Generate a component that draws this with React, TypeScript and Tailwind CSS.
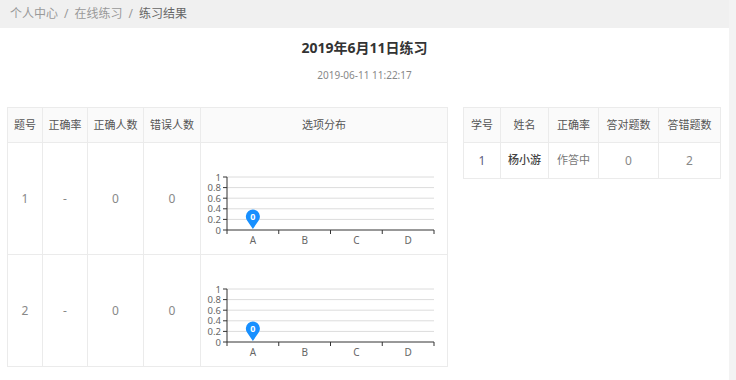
const font = {
  fontFamily: '"Noto Sans", "Noto Sans CJK SC", sans-serif',
};

const leftHead = ["题号", "正确率", "正确人数", "错误人数", "选项分布"];
const leftCols = [35, 45, 56, 57, 247];
const rightHead = ["学号", "姓名", "正确率", "答对题数", "答错题数"];
const rightCols = [37, 48, 50, 60, 62];

const questions = [
  { no: 1, rate: "-", right: 0, wrong: 0 },
  { no: 2, rate: "-", right: 0, wrong: 0 },
];

function OptionChart() {
  const top = 34;
  const step = 10.6;
  const x0 = 26;
  const x1 = 233;
  const yLabels = ["1", "0.8", "0.6", "0.4", "0.2", "0"];
  const base = top + step * 5;
  const seg = (x1 - x0) / 4;
  return (
    <svg width="247" height="111" className="block">
      {yLabels.map((l, i) => {
        const y = top + step * i;
        return (
          <g key={l}>
            {i < 5 && <line x1={x0} x2={x1} y1={y} y2={y} stroke="#dcdcdc" strokeWidth="1" />}
            <line x1={x0 - 4} x2={x0} y1={y} y2={y} stroke="#333" strokeWidth="1" />
            <text x={x0 - 6} y={y + 3.5} textAnchor="end" fontSize="9.5" fill="#666">
              {l}
            </text>
          </g>
        );
      })}
      <line x1={x0} x2={x0} y1={top} y2={base} stroke="#333" strokeWidth="1" />
      <line x1={x0} x2={x1} y1={base} y2={base} stroke="#333" strokeWidth="1" />
      {[0, 1, 2, 3, 4].map((i) => (
        <line key={i} x1={x0 + seg * i} x2={x0 + seg * i} y1={base} y2={base + 4} stroke="#333" strokeWidth="1" />
      ))}
      {["A", "B", "C", "D"].map((l, i) => (
        <text key={l} x={x0 + seg * i + seg / 2} y={base + 14} textAnchor="middle" fontSize="10" fill="#666">
          {l}
        </text>
      ))}
      <path
        d={`M ${x0 + seg / 2} ${base - 1} L ${x0 + seg / 2 - 5.8} ${base - 9.5} A 7 7 0 1 1 ${x0 + seg / 2 + 5.8} ${base - 9.5} Z`}
        fill="#1890ff"
      />
      <text x={x0 + seg / 2} y={base - 10.5} textAnchor="middle" fontSize="9" fontWeight="bold" fill="#fff">
        0
      </text>
    </svg>
  );
}

export default function App() {
  return (
    <div className="flex w-[736px] min-h-[380px] bg-white" style={font}>
      <div className="w-[729px] shrink-0">
        <div className="h-[28px] bg-[#f0f0f0] flex items-center pl-[10px] text-[12px] text-[#999]">
          <span>个人中心</span>
          <span className="mx-[6px]">/</span>
          <span>在线练习</span>
          <span className="mx-[6px]">/</span>
          <span className="text-[#666]">练习结果</span>
        </div>

        <h1 className="mt-[10px] text-center text-[14px] leading-[20px] font-bold text-[#333]">
          2019年6月11日练习
        </h1>
        <p className="mt-[10px] text-center text-[10px] leading-[14px] text-[#888]">2019-06-11 11:22:17</p>

        <div className="mt-[25px] flex items-start gap-[15px] pl-[7px]">
          <table className="table-fixed border-collapse w-[440px] text-[11px]">
            <colgroup>
              {leftCols.map((w, i) => (
                <col key={i} style={{ width: w }} />
              ))}
            </colgroup>
            <thead>
              <tr className="h-[35px] bg-[#fafafa]">
                {leftHead.map((h) => (
                  <th key={h} className="border border-[#ebebeb] font-normal text-[#555] p-0">
                    {h}
                  </th>
                ))}
              </tr>
            </thead>
            <tbody>
              {questions.map((q) => (
                <tr key={q.no} className="h-[111px]">
                  <td className="border border-[#ebebeb] text-center text-[12px] text-[#888]">{q.no}</td>
                  <td className="border border-[#ebebeb] text-center text-[12px] text-[#888]">{q.rate}</td>
                  <td className="border border-[#ebebeb] text-center text-[12px] text-[#888]">{q.right}</td>
                  <td className="border border-[#ebebeb] text-center text-[12px] text-[#888]">{q.wrong}</td>
                  <td className="border border-[#ebebeb] p-0 align-top">
                    <OptionChart />
                  </td>
                </tr>
              ))}
            </tbody>
          </table>

          <table className="table-fixed border-collapse w-[257px] text-[11px]">
            <colgroup>
              {rightCols.map((w, i) => (
                <col key={i} style={{ width: w }} />
              ))}
            </colgroup>
            <thead>
              <tr className="h-[35px] bg-[#fafafa]">
                {rightHead.map((h) => (
                  <th key={h} className="border border-[#ebebeb] font-normal text-[#555] p-0">
                    {h}
                  </th>
                ))}
              </tr>
            </thead>
            <tbody>
              <tr className="h-[36px]">
                <td className="border border-[#ebebeb] text-center text-[12px] text-[#5c5c80]">1</td>
                <td className="border border-[#ebebeb] text-center font-medium text-[#444]">杨小游</td>
                <td className="border border-[#ebebeb] text-center text-[#777]">作答中</td>
                <td className="border border-[#ebebeb] text-center text-[12px] text-[#888]">0</td>
                <td className="border border-[#ebebeb] text-center text-[12px] text-[#888]">2</td>
              </tr>
            </tbody>
          </table>
        </div>
      </div>
      <div className="flex-1 bg-[#f3f3f3]" />
    </div>
  );
}
